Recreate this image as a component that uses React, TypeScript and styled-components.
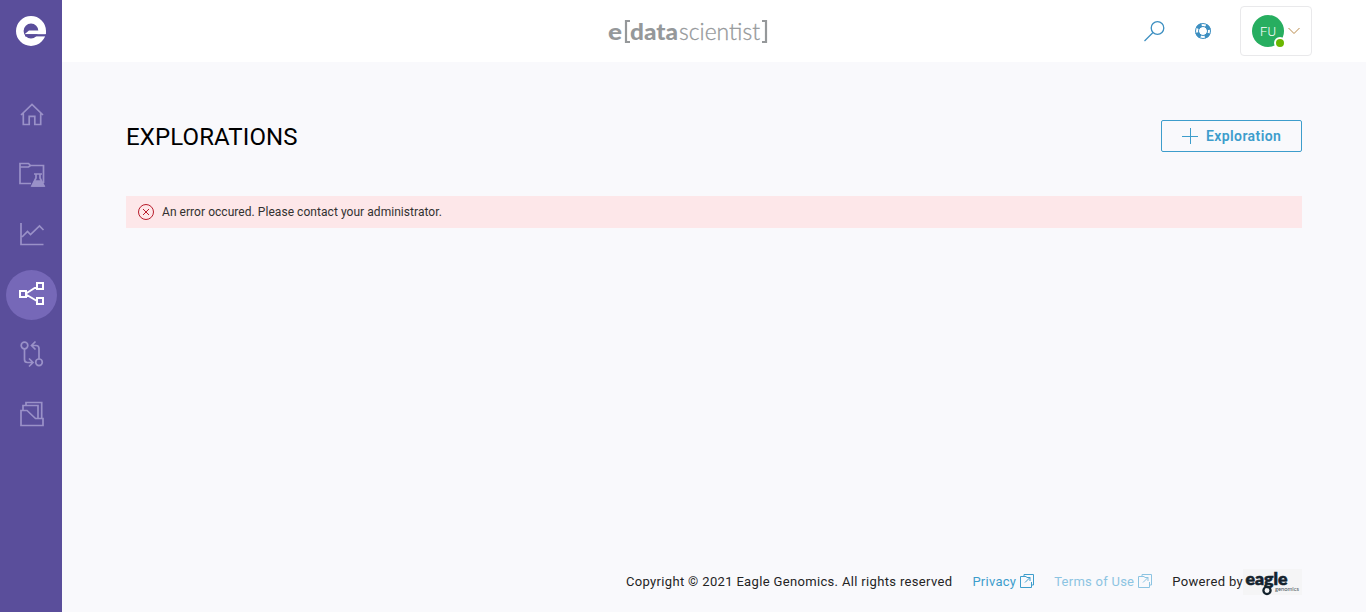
import React from "react";
import styled, { createGlobalStyle } from "styled-components";

const GlobalStyle = createGlobalStyle`
  * { box-sizing: border-box; }
  body { margin: 0; background: #f9f9fc; font-family: Roboto, "Liberation Sans", sans-serif; }
  svg { display: block; flex: none; overflow: visible; }
`;

const Shell = styled.div`
  display: flex;
  height: 100vh;
  overflow: hidden;
`;

const Sidebar = styled.nav`
  display: flex;
  flex-direction: column;
  align-items: center;
  flex: none;
  width: 62px;
  background: #5a4e9b;
`;

const Brand = styled.a`
  display: flex;
  justify-content: center;
  padding-top: 15px;
  height: 90px;
`;

const NavItem = styled.a<{ $active?: boolean }>`
  display: flex;
  align-items: center;
  justify-content: center;
  flex: none;
  width: 51px;
  height: 50px;
  margin-bottom: 10px;
  padding: 0 0 2px 1px;
  border-radius: 50%;
  color: ${(p) => (p.$active ? "#ffffff" : "#9a91c8")};
  background: ${(p) => (p.$active ? "#7668b8" : "transparent")};
`;

const Page = styled.div`
  display: flex;
  flex-direction: column;
  flex: 1;
  min-width: 0;
`;

const Header = styled.header`
  display: grid;
  grid-template-columns: 1fr 164px 1fr;
  align-items: center;
  flex: none;
  height: 62px;
  padding: 0 54px 0 0;
  background: #ffffff;
`;

const Wordmark = styled.div`
  grid-column: 2;
  margin-left: 3px;
  padding-top: 2px;
`;

const Tools = styled.div`
  display: flex;
  align-items: center;
  justify-content: flex-end;
  color: #3d8fc1;
`;

const Tool = styled.a`
  display: flex;
  margin-right: 28px;
`;

const UserMenu = styled.button`
  display: flex;
  align-items: center;
  gap: 4px;
  width: 72px;
  height: 50px;
  padding: 0 0 0 11px;
  border: 1px solid #e9e9eb;
  border-radius: 4px;
  background: #ffffff;
`;

const Avatar = styled.span`
  position: relative;
  display: flex;
  align-items: center;
  justify-content: center;
  width: 32px;
  height: 32px;
  border-radius: 50%;
  background: #27ae60;
  color: #ffffff;
  font: 300 13px Roboto, sans-serif;
`;

const Presence = styled.span`
  position: absolute;
  right: -2px;
  bottom: -2px;
  width: 12px;
  height: 12px;
  border: 2px solid #ffffff;
  border-radius: 50%;
  background: #6bb700;
`;

const Main = styled.main`
  display: flex;
  flex-direction: column;
  flex: 1;
  padding: 58px 64px 0;
`;

const TitleRow = styled.div`
  display: flex;
  align-items: center;
  justify-content: space-between;
  height: 32px;
  margin-bottom: 44px;
`;

const Title = styled.h1`
  margin: 2px 0 0;
  color: #000000;
  font-size: 24px;
  font-weight: 400;
  line-height: 32px;
  letter-spacing: 0.13px;
`;

const AddButton = styled.button`
  display: flex;
  align-items: center;
  gap: 8px;
  width: 141px;
  height: 32px;
  padding: 0 0 0 20px;
  border: 1px solid #3d9dcc;
  border-radius: 2px;
  background: transparent;
  color: #3d9dcc;
  font: 600 14px Roboto, sans-serif;
  letter-spacing: 0.4px;
`;

const Alert = styled.div`
  display: flex;
  align-items: center;
  gap: 8px;
  height: 32px;
  padding-left: 12px;
  background: #fde7e9;
  color: #323130;
  font-size: 12px;
  letter-spacing: 0.05px;
`;

const Footer = styled.footer`
  display: flex;
  align-items: center;
  justify-content: flex-end;
  height: 30px;
  margin: auto 0 16px;
  color: #242424;
  font-size: 13px;
  letter-spacing: 0.34px;
  white-space: nowrap;
`;

const FooterLink = styled.a<{ $faded?: boolean }>`
  display: flex;
  align-items: center;
  gap: 4px;
  margin-left: 20px;
  color: ${(p) => (p.$faded ? "#8cc4e2" : "#3d9dcc")};
  letter-spacing: 0.26px;
`;

const Powered = styled.span`
  margin-left: 20px;
`;

const OpenIcon = () => (
  <svg width="14" height="14" viewBox="0 0 14 14" fill="none" stroke="currentColor">
    <path d="M4 2.500V.5h9.500v10.500H11.500M6.500 2.500H.5v11h11V8M5 8.500 10 3.500M6.500 3.500H10V7" />
  </svg>
);

const icon = { width: 28, height: 28, viewBox: "0 0 28 28", fill: "none", stroke: "currentColor", strokeWidth: 1.7 };

export default function App() {
  return (
    <>
      <GlobalStyle />
      <Shell>
        <Sidebar>
          <Brand>
            <svg width="32" height="32" viewBox="0 0 32 32">
              <circle cx="16" cy="16" r="11.200" fill="none" stroke="#fff" strokeWidth="7.600" />
              <path fill="#fff" d="M9.500 19.200 14 15.500h16.800v3.700z" />
              <path fill="#5a4e9b" d="M10 19.200h21v2.200H10z" />
            </svg>
          </Brand>
          <NavItem>
            <svg {...icon}>
              <path d="M3 15 14 4.500l11 10.500M5.300 13v11.500h5.900v-8.200h5.600v8.200h5.900V13" />
            </svg>
          </NavItem>
          <NavItem>
            <svg {...icon}>
              <path d="M13 23.500H2V3.500h8.500l2 2H25.500V23M2 7h8.500l2-1.500" />
              <path d="M16 14h8M18 14v4l-4 8h12l-4-8v-4" />
              <path d="m17 21-2.500 5h11L23 21z" fill="currentColor" />
            </svg>
          </NavItem>
          <NavItem>
            <svg {...icon}>
              <path d="M3 3v21.500h22.500M4 17l5.500-5.500 3 3L21.500 6l4 4" />
            </svg>
          </NavItem>
          <NavItem $active>
            <svg {...icon} strokeWidth={2}>
              <path d="M2 11h6v6H2zM19 3h6v6h-6zM19 18h6v6h-6zM8 13.500l11-7M8 14.500l11 6.500" />
            </svg>
          </NavItem>
          <NavItem>
            <svg {...icon}>
              <circle cx="6.500" cy="5.500" r="3.300" />
              <circle cx="21" cy="22.300" r="3.300" />
              <path d="M6.500 9v10.500q0 3 3 3H14M11 18.500l4 4-4 4M21 19V8.500q0-3-3-3H14M17.500 1.500l-4 4 4 4" />
            </svg>
          </NavItem>
          <NavItem>
            <svg {...icon}>
              <path d="M3 10.500h6l8.500 8h7.500V25.500H3zM5 10V5.500h15V18M8 5V2.500h15.700V18" />
            </svg>
          </NavItem>
        </Sidebar>
        <Page>
          <Header>
            <Wordmark>
              <svg width="164" height="34" viewBox="0 0 164 34" fill="#95989a" fontFamily="Lato, sans-serif" fontSize="23">
                <text x="0" y="24.500" fontWeight="900" textLength="14" lengthAdjust="spacingAndGlyphs">e</text>
                <path d="M22 6h-4v21h4M154 6h4v21h-4" fill="none" stroke="#95989a" strokeWidth="2.200" />
                <text x="22" y="24.500" fontWeight="900" textLength="48" lengthAdjust="spacingAndGlyphs">data</text>
                <text x="71" y="24.500" fontWeight="300" textLength="81" lengthAdjust="spacingAndGlyphs" stroke="#95989a" strokeWidth="0.300">scientist</text>
              </svg>
            </Wordmark>
            <Tools>
              <Tool>
                <svg width="23" height="22" viewBox="0 0 23 22" fill="none" stroke="currentColor" strokeWidth="1.300">
                  <circle cx="14.500" cy="8" r="6.300" />
                  <path d="M10 12.500 1.500 21" />
                </svg>
              </Tool>
              <Tool>
                <svg width="18" height="18" viewBox="0 0 18 18" fill="none" stroke="currentColor">
                  <circle cx="9" cy="9" r="7.500" />
                  <circle cx="9" cy="9" r="4.500" />
                  <circle cx="9" cy="9" r="6" strokeWidth="3.800" strokeDasharray="5.200 4.225" strokeDashoffset="-2.110" />
                </svg>
              </Tool>
              <UserMenu>
                <Avatar>
                  FU
                  <Presence />
                </Avatar>
                <svg width="12" height="8" viewBox="0 0 12 8" fill="none" stroke="#b98a4a">
                  <path d="m.5 1 5.500 5.500L11.500 1" />
                </svg>
              </UserMenu>
            </Tools>
          </Header>
          <Main>
            <TitleRow>
              <Title>EXPLORATIONS</Title>
              <AddButton>
                <svg width="16" height="16" viewBox="0 0 16 16" stroke="currentColor">
                  <path d="M8.500 0v16M0 8.500h16" />
                </svg>
                Exploration
              </AddButton>
            </TitleRow>
            <Alert>
              <svg width="16" height="16" viewBox="0 0 16 16" fill="none" stroke="#b81c2b">
                <circle cx="8" cy="8" r="7.500" />
                <path d="m5 5 6 6M11 5l-6 6" />
              </svg>
              An error occured. Please contact your administrator.
            </Alert>
            <Footer>
              <span>Copyright © 2021 Eagle Genomics. All rights reserved</span>
              <FooterLink>Privacy<OpenIcon /></FooterLink>
              <FooterLink $faded>Terms of Use<OpenIcon /></FooterLink>
              <Powered>Powered by</Powered>
              <svg width="59" height="26" viewBox="0 0 59 26" fill="#14232d" fontFamily="Lato, sans-serif" letterSpacing="0">
                <path fill="#f5f5f6" d="M0 1h59v26H0z" />
                <text x="2.500" y="17" fontSize="16" fontWeight="900" textLength="42" lengthAdjust="spacingAndGlyphs" stroke="#14232d" strokeWidth="0.600">eagle</text>
                <circle cx="24" cy="22.500" r="3.600" fill="none" stroke="#14232d" strokeWidth="2.300" />
                <text x="32" y="23" fontSize="6.500" fill="#4b565d" textLength="24" lengthAdjust="spacingAndGlyphs">genomics</text>
              </svg>
            </Footer>
          </Main>
        </Page>
      </Shell>
    </>
  );
}
